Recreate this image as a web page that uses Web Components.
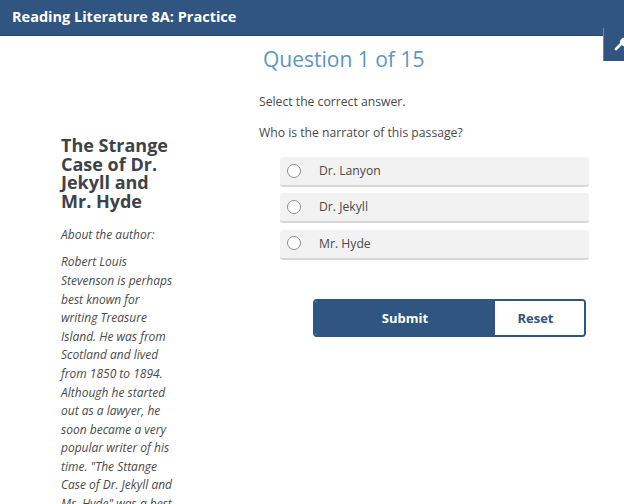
<!DOCTYPE html>
<html>
<head>
<meta charset="utf-8">
<title>Reading Literature 8A: Practice</title>
<style>
  html, body { margin: 0; height: 100%; overflow: hidden; background: #fff; }
  body { font-family: "Open Sans", sans-serif; color: #444; }
</style>
</head>
<body>
<practice-page>
  <practice-header slot="header">Reading Literature 8A: Practice</practice-header>
  <passage-panel slot="left" heading="The Strange Case of Dr. Jekyll and Mr. Hyde">
    <p>About the author:</p>
    <p>Robert Louis Stevenson is perhaps best known for writing Treasure Island. He was from Scotland and lived from 1850 to 1894. Although he started out as a lawyer, he soon became a very popular writer of his time. "The Sttange Case of Dr. Jekyll and Mr. Hyde" was a best seller in his day.</p>
  </passage-panel>
  <question-panel slot="right" heading="Question 1 of 15">
    <answer-option>Dr. Lanyon</answer-option>
    <answer-option>Dr. Jekyll</answer-option>
    <answer-option>Mr. Hyde</answer-option>
  </question-panel>
</practice-page>

<script>
class PracticePage extends HTMLElement {
  connectedCallback() {
    const shadow = this.attachShadow({mode: "open"});
    shadow.innerHTML = `
    <style>
      :host { display: block; position: relative; height: 504px; overflow: hidden; }
      .body { display: flex; }
      .left { width: 115px; margin-left: 61px; padding-top: 100px; }
      .right { width: 330px; margin-left: 83px; }
      .tool {
        position: absolute; left: 603px; top: 28px; width: 24px; height: 33px;
        background: #2f5580; border-left: 1px solid #6d8aa8;
        box-sizing: border-box; overflow: hidden;
      }
      .tool svg { position: absolute; left: 10px; top: 9px; }
    </style>
    <slot name="header"></slot>
    <div class="body">
      <div class="left"><slot name="left"></slot></div>
      <div class="right"><slot name="right"></slot></div>
    </div>
    <div class="tool">
      <svg width="16" height="14" viewBox="0 0 16 14"><path d="M2 12 L8 6" fill="none" stroke="#fff" stroke-width="2.6" stroke-linecap="round"/><path d="M6 6 A4.5 4.5 0 0 1 12 1 L10 3.5 L12.5 6 L15 4 A4.5 4.5 0 0 1 9 9 Z" fill="#fff"/></svg>
    </div>`;
  }
}
customElements.define('practice-page', PracticePage);

class PracticeHeader extends HTMLElement {
  connectedCallback() {
    const shadow = this.attachShadow({mode: "open"});
    shadow.innerHTML = `
    <style>
      :host {
        display: block; height: 36px; box-sizing: border-box; padding: 0 12px;
        background: #2f5580; border-bottom: 1px solid #264a73;
        color: #fff; font-size: 14.5px; font-weight: 700; line-height: 33px;
      }
    </style>
    <slot></slot>`;
  }
}
customElements.define('practice-header', PracticeHeader);

class PassagePanel extends HTMLElement {
  connectedCallback() {
    const shadow = this.attachShadow({mode: "open"});
    shadow.innerHTML = `
    <style>
      :host { display: block; font-size: 12px; font-style: italic; line-height: 18.6px; color: #4a4a4a; }
      h2 {
        margin: 0 0 16px; font-size: 18px; line-height: 18.6px;
        font-style: normal; font-weight: 700; color: #3d4248;
      }
      ::slotted(p) { margin: 0 0 8.4px; }
    </style>
    <h2>${this.getAttribute("heading")}</h2>
    <slot></slot>`;
  }
}
customElements.define('passage-panel', PassagePanel);

class QuestionPanel extends HTMLElement {
  connectedCallback() {
    const shadow = this.attachShadow({mode: "open"});
    shadow.innerHTML = `
    <style>
      :host { display: block; font-size: 12.2px; color: #4a4a4a; }
      h1 {
        margin: 8px 0 19.5px; font-size: 21px; line-height: 30px; font-weight: 400;
        color: #5b96c4; white-space: nowrap; padding-left: 4px;
      }
      p { margin: 0 0 15px; line-height: 16px; }
      .options { display: flex; flex-direction: column; gap: 6.3px; margin: 16.5px 0 0 21px; width: 309px; }
      .actions {
        display: flex; margin: 39.4px 0 0 54px; width: 273px; height: 38px; box-sizing: border-box;
        border: 2px solid #2f5580; border-radius: 4px; overflow: hidden;
      }
      .actions div { display: flex; align-items: center; justify-content: center; font-size: 13px; font-weight: 700; }
      .submit { width: 180px; background: #2f5580; color: #fff; }
      .reset { flex: 1; box-sizing: border-box; padding-right: 8px; background: #fff; color: #2f5580; }
    </style>
    <h1>${this.getAttribute("heading")}</h1>
    <p>Select the correct answer.</p>
    <p>Who is the narrator of this passage?</p>
    <div class="options"><slot></slot></div>
    <div class="actions">
      <div class="submit">Submit</div>
      <div class="reset">Reset</div>
    </div>`;
  }
}
customElements.define('question-panel', QuestionPanel);

class AnswerOption extends HTMLElement {
  connectedCallback() {
    const shadow = this.attachShadow({mode: "open"});
    shadow.innerHTML = `
    <style>
      :host {
        display: flex; align-items: center; height: 30px; box-sizing: border-box;
        background: #f2f2f3; border-bottom: 2px solid #d6d7d9; border-radius: 3px;
        font-size: 12.2px; color: #4a4a4a; padding-bottom: 1px;
      }
      .radio {
        width: 14px; height: 14px; box-sizing: border-box; margin: 0 18px 0 7px;
        border: 1.5px solid #8c8c8c; border-radius: 50%; background: #fff;
      }
    </style>
    <div class="radio"></div><span><slot></slot></span>`;
  }
}
customElements.define('answer-option', AnswerOption);
</script>
</body>
</html>
